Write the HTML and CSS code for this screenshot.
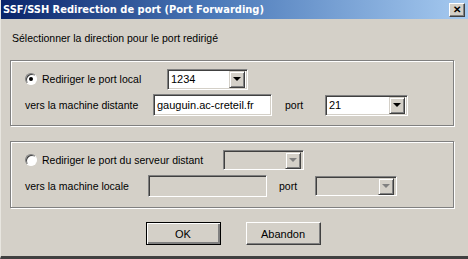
FILE: index.html
```html
<!DOCTYPE html>
<html lang="fr">
<head>
    <meta charset="UTF-8">
    <title>SSF/SSH Redirection de port (Port Forwarding)</title>
    <link rel="stylesheet" href="styles.css">
</head>
<body>
    <div class="window">
        <div class="titlebar">
            <span class="title">SSF/SSH Redirection de port (Port Forwarding)</span>
            <span class="close">&#x2715;</span>
        </div>

        <div class="content">
            <p class="intro">Sélectionner la direction pour le port redirigé</p>

            <div class="group group-local">
                <div class="row">
                    <span class="radio checked"></span>
                    <span class="label radio-label w-local">Rediriger le port local</span>
                    <span class="combo combo-local"><span class="value">1234</span><span class="arrow"></span></span>
                </div>
                <div class="row">
                    <span class="label w-dest">vers la machine distante</span>
                    <span class="field field-local">gauguin.ac-creteil.fr</span>
                    <span class="label port-label">port</span>
                    <span class="combo combo-port"><span class="value">21</span><span class="arrow"></span></span>
                </div>
            </div>

            <div class="group group-remote">
                <div class="row">
                    <span class="radio"></span>
                    <span class="label radio-label w-remote">Rediriger le port du serveur distant</span>
                    <span class="combo disabled combo-remote"><span class="value"></span><span class="arrow"></span></span>
                </div>
                <div class="row">
                    <span class="label w-locale">vers la machine locale</span>
                    <span class="field disabled field-remote"></span>
                    <span class="label port-label2">port</span>
                    <span class="combo disabled combo-port2"><span class="value"></span><span class="arrow"></span></span>
                </div>
            </div>

            <div class="buttons">
                <button class="btn default">OK</button>
                <button class="btn">Abandon</button>
            </div>
        </div>
    </div>
</body>
</html>
```

FILE: styles.css
```css
body {
    margin: 0;
    background: #d4d0c8;
    font-family: 'Liberation Sans', Arial, sans-serif;
    font-size: 10.5px;
    color: #000;
}
.window {
    width: 468px;
    height: 259px;
    box-sizing: border-box;
    background: #d4d0c8;
    border-left: 1px solid #e8e6e0;
    border-bottom: 3px solid #404040;
    display: flex;
    flex-direction: column;
}
.titlebar {
    height: 19px;
    background: linear-gradient(to right, #0a246a, #4a78b8 45%, #a6caf0);
    display: flex;
    align-items: center;
    justify-content: space-between;
    padding: 0 2px 0 2px;
}
.title {
    color: #fff;
    font-family: 'DejaVu Sans Condensed', 'DejaVu Sans', sans-serif;
    font-weight: bold;
    font-size: 11px;
}
.close {
    width: 14px;
    height: 12px;
    background: #d4d0c8;
    border: 1px solid;
    border-color: #fff #404040 #404040 #fff;
    box-shadow: inset -1px -1px #808080;
    font-size: 10px;
    font-weight: bold;
    line-height: 12px;
    text-align: center;
    margin-right: 1px;
}
.content {
    padding: 0 14px 0 9px;
    display: flex;
    flex-direction: column;
}
.intro {
    margin: 12px 0 0 2px;
    height: 14px;
    line-height: 14px;
}
.group {
    height: 66px;
    box-sizing: border-box;
    border: 1px solid #808080;
    box-shadow: inset 1px 1px #fff, 1px 1px #fff;
    display: flex;
    flex-direction: column;
    gap: 4px;
    padding: 7px 0 0 14px;
}
.group-local {
    margin-top: 15px;
}
.group-remote {
    margin-top: 15px;
    height: 67px;
}
.row {
    display: flex;
    align-items: center;
    height: 22px;
}
.label {
    white-space: nowrap;
}
.radio {
    width: 10px;
    height: 10px;
    border-radius: 50%;
    background: #fff;
    border: 1px solid;
    border-color: #808080 #fff #fff #808080;
    box-shadow: inset 1px 1px #404040;
    margin-right: 5px;
    position: relative;
}
.radio.checked::after {
    content: "";
    position: absolute;
    left: 3px;
    top: 3px;
    width: 4px;
    height: 4px;
    border-radius: 50%;
    background: #000;
}
.w-local { width: 125px; }
.w-remote { width: 181px; }
.w-dest { width: 128px; }
.w-locale { width: 123px; }
.combo, .field {
    box-sizing: border-box;
    height: 21px;
    background: #fff;
    border: 1px solid;
    border-color: #808080 #fff #fff #808080;
    box-shadow: inset 1px 1px #404040, inset -1px -1px #d4d0c8;
    display: flex;
    align-items: center;
    font-size: 11px;
}
.combo .value {
    flex: 1;
    padding-left: 3px;
}
.combo .arrow {
    width: 16px;
    height: 17px;
    box-sizing: border-box;
    margin-right: 2px;
    background: #d4d0c8;
    border: 1px solid;
    border-color: #d4d0c8 #404040 #404040 #d4d0c8;
    box-shadow: inset 1px 1px #fff, inset -1px -1px #808080;
    display: flex;
    align-items: center;
    justify-content: center;
}
.combo .arrow::after {
    content: "";
    border-left: 4px solid transparent;
    border-right: 4px solid transparent;
    border-top: 4px solid #000;
}
.disabled {
    background: #d4d0c8;
}
.disabled .arrow::after {
    border-top-color: #808080;
}
.field {
    padding-left: 3px;
    height: 22px;
}
.combo-local { width: 81px; }
.field-local { width: 119px; }
.port-label { margin-left: 13px; width: 40px; }
.combo-port { width: 83px; }
.combo-remote { width: 81px; height: 20px; }
.field-remote { width: 119px; }
.port-label2 { margin-left: 12px; width: 36px; }
.combo-port2 { width: 82px; height: 20px; }
.buttons {
    display: flex;
    justify-content: center;
    gap: 25px;
    margin-top: 14px;
    padding-left: 2px;
}
.btn {
    width: 75px;
    height: 23px;
    background: #d4d0c8;
    font-family: 'Liberation Sans', Arial, sans-serif;
    font-size: 11px;
    border: 1px solid;
    border-color: #fff #404040 #404040 #fff;
    box-shadow: inset -1px -1px #808080;
    padding: 0;
}
.btn.default {
    border: 1px solid #000;
    box-shadow: inset 1px 1px #fff, inset -2px -2px #808080, inset -1px -1px #404040;
}
```
